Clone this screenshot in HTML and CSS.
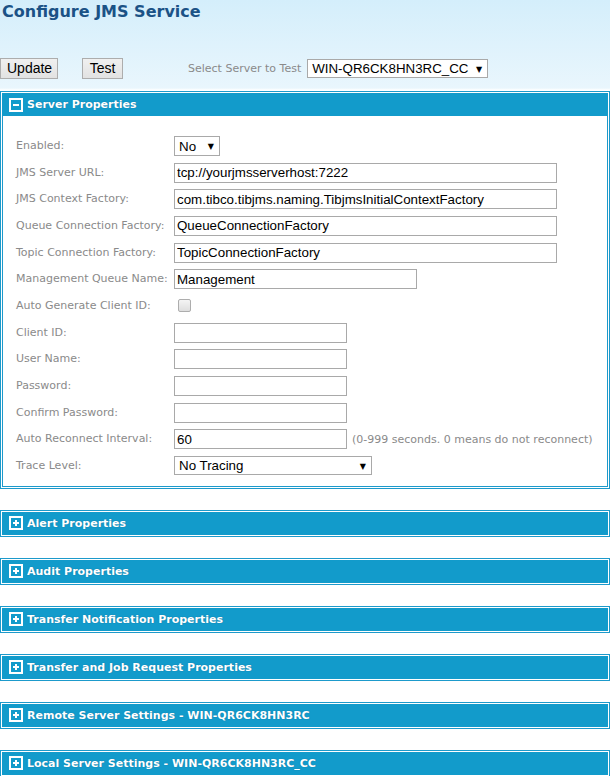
FILE: index.html
```html
<!DOCTYPE html>
<html>
<head>
<meta charset="utf-8">
<title>Configure JMS Service</title>
<link rel="stylesheet" href="styles.css">
</head>
<body>
<h1 class="title">Configure JMS Service</h1>
<div class="toolbar">
  <button class="btn btn-update">Update</button>
  <button class="btn btn-test">Test</button>
  <span class="toolbar-label">Select Server to Test</span>
  <span class="select-wrap server-select"><select class="select"><option>WIN-QR6CK8HN3RC_CC</option></select></span>
</div>

<div class="panel">
  <div class="panel-head"><span class="toggle minus"></span>Server Properties</div>
  <div class="panel-body">
    <div class="form">
      <label class="lbl">Enabled:</label>
      <div class="field"><span class="select-wrap enabled-select"><select class="select"><option>No</option></select></span></div>

      <label class="lbl">JMS Server URL:</label>
      <div class="field"><input class="inp long" value="tcp://yourjmsserverhost:7222"></div>

      <label class="lbl">JMS Context Factory:</label>
      <div class="field"><input class="inp long" value="com.tibco.tibjms.naming.TibjmsInitialContextFactory"></div>

      <label class="lbl">Queue Connection Factory:</label>
      <div class="field"><input class="inp long" value="QueueConnectionFactory"></div>

      <label class="lbl">Topic Connection Factory:</label>
      <div class="field"><input class="inp long" value="TopicConnectionFactory"></div>

      <label class="lbl">Management Queue Name:</label>
      <div class="field"><input class="inp medium" value="Management"></div>

      <label class="lbl">Auto Generate Client ID:</label>
      <div class="field"><span class="checkbox"></span></div>

      <label class="lbl">Client ID:</label>
      <div class="field"><input class="inp short" value=""></div>

      <label class="lbl">User Name:</label>
      <div class="field"><input class="inp short" value=""></div>

      <label class="lbl">Password:</label>
      <div class="field"><input class="inp short" type="password" value=""></div>

      <label class="lbl">Confirm Password:</label>
      <div class="field"><input class="inp short" type="password" value=""></div>

      <label class="lbl">Auto Reconnect Interval:</label>
      <div class="field"><input class="inp short" value="60"><span class="hint">(0-999 seconds. 0 means do not reconnect)</span></div>

      <label class="lbl">Trace Level:</label>
      <div class="field"><span class="select-wrap trace-select"><select class="select"><option>No Tracing</option></select></span></div>
    </div>
  </div>
</div>

<div class="panel"><div class="panel-head"><span class="toggle plus"></span>Alert Properties</div></div>
<div class="panel"><div class="panel-head"><span class="toggle plus"></span>Audit Properties</div></div>
<div class="panel"><div class="panel-head"><span class="toggle plus"></span>Transfer Notification Properties</div></div>
<div class="panel"><div class="panel-head"><span class="toggle plus"></span>Transfer and Job Request Properties</div></div>
<div class="panel"><div class="panel-head"><span class="toggle plus"></span>Remote Server Settings - WIN-QR6CK8HN3RC</div></div>
<div class="panel"><div class="panel-head"><span class="toggle plus"></span>Local Server Settings - WIN-QR6CK8HN3RC_CC</div></div>
</body>
</html>
```

FILE: styles.css
```css
html, body {
  margin: 0;
  padding: 0;
}
body {
  background: linear-gradient(to bottom, #d4eefb 0px, #e9f6fd 88px, #ffffff 90px);
  background-repeat: no-repeat;
  background-color: #fff;
  font-family: "DejaVu Sans", Verdana, sans-serif;
  width: 610px;
  overflow: hidden;
}
.title {
  margin: 0;
  padding: 2px 2px 0 2px;
  height: 22px;
  font-size: 16px;
  line-height: 20px;
  font-weight: bold;
  color: #1b5286;
}
.toolbar {
  margin-top: 34px;
  height: 21px;
  margin-bottom: 12px;
  display: flex;
  align-items: center;
}
.btn {
  font-family: "Liberation Sans", Arial, sans-serif;
  font-size: 14px;
  color: #000;
  height: 21px;
  padding: 0 6px;
  border: 1px solid #adadad;
  background: linear-gradient(#f0f0f0, #e2e2e2);
  border-radius: 0;
  line-height: 19px;
}
.btn-update { width: 58px; margin-left: 0; }
.btn-test { width: 41px; margin-left: 24px; }
.toolbar-label {
  margin-left: 65px;
  font-size: 11px;
  color: #8a8a8a;
}
.select-wrap {
  position: relative;
  display: inline-block;
}
.select-wrap::after {
  content: "\25BC";
  position: absolute;
  right: 6px;
  top: 50%;
  transform: translateY(-50%);
  font-size: 8px;
  color: #000;
  pointer-events: none;
}
.select {
  -webkit-appearance: none;
  appearance: none;
  font-family: "Liberation Sans", Arial, sans-serif;
  font-size: 13.33px;
  color: #000;
  background: #fff;
  border: 1px solid #a9a9a9;
  border-radius: 0;
  height: 19px;
  padding: 0 0 0 4px;
  margin: 0;
  line-height: 17px;
  display: block;
}
.server-select { margin-left: 6px; }
.server-select .select { width: 181px; height: 19px; }
.enabled-select .select { width: 46px; height: 20px; }
.trace-select .select { width: 198px; height: 19px; }

.panel {
  border: 1px solid #1d9acb;
  padding: 1px;
  background: #fff;
  margin-bottom: 21px;
}
.panel-head {
  background: #129bcb;
  height: 23px;
  display: flex;
  align-items: center;
  padding-left: 7px;
  color: #fff;
  font-weight: bold;
  font-size: 11px;
  text-shadow: 0 0 1px rgba(0, 60, 100, 0.5);
}
.toggle {
  width: 10px;
  height: 10px;
  border: 2px solid #fff;
  margin-right: 4px;
  position: relative;
  flex: none;
}
.toggle::before {
  content: "";
  position: absolute;
  left: 2px;
  right: 2px;
  top: 4px;
  height: 2px;
  background: #fff;
}
.toggle.plus::after {
  content: "";
  position: absolute;
  top: 2px;
  bottom: 2px;
  left: 4px;
  width: 2px;
  background: #fff;
}
.panel-body {
  border: 1px solid #1d9acb;
  border-top: none;
  background: #fff;
  padding: 20px 0 10px 13px;
}
.form {
  display: grid;
  grid-template-columns: 158px 1fr;
  row-gap: 6.67px;
  align-items: center;
}
.lbl {
  font-size: 11px;
  color: #8a8a8a;
  line-height: 20px;
  height: 20px;
}
.field {
  display: flex;
  align-items: center;
  height: 20px;
}
.inp {
  font-family: "Liberation Sans", Arial, sans-serif;
  font-size: 13.33px;
  color: #000;
  border: 1px solid #a9a9a9;
  height: 20px;
  box-sizing: border-box;
  padding: 0 2px;
  margin: 0;
  background: #fff;
}
.long { width: 383px; }
.medium { width: 243px; }
.short { width: 173px; }
.hint {
  margin-left: 5px;
  font-size: 11px;
  color: #8a8a8a;
  white-space: nowrap;
}
.checkbox {
  display: inline-block;
  width: 11px;
  height: 11px;
  border: 1px solid #adadad;
  border-radius: 2px;
  background: linear-gradient(#f4f4f4, #dedede);
  margin-left: 4px;
}
```
